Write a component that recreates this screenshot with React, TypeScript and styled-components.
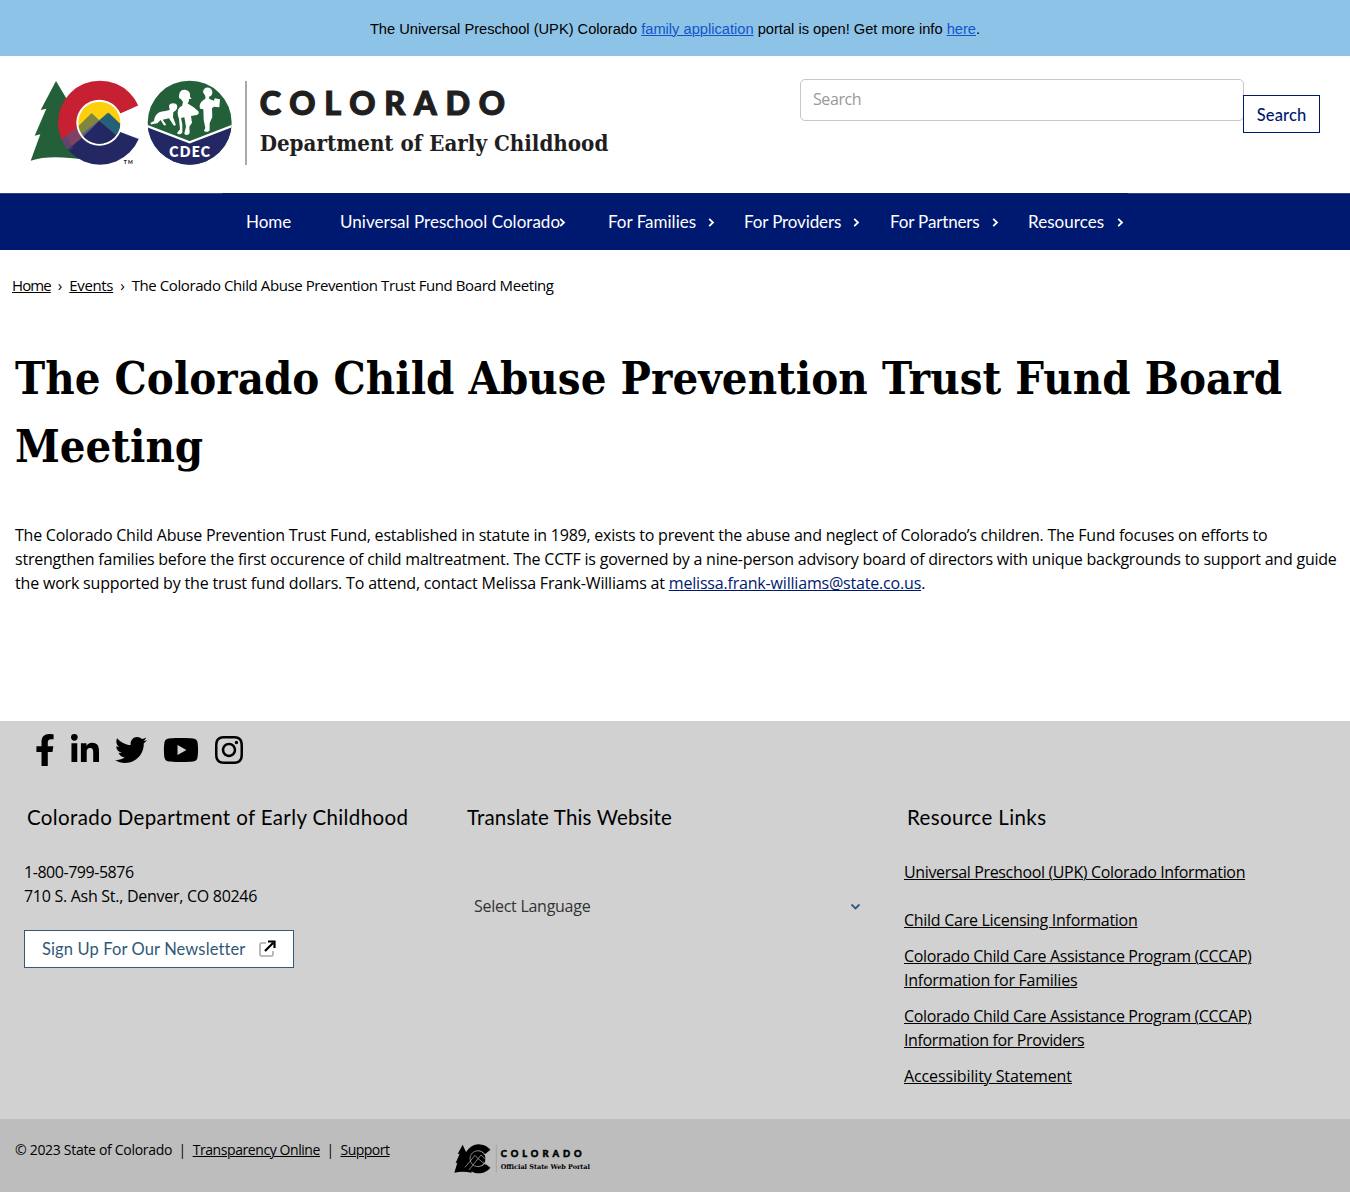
import React from "react";
import styled, { createGlobalStyle } from "styled-components";
import { FaFacebookF, FaLinkedinIn, FaTwitter, FaYoutube, FaInstagram } from "react-icons/fa";

const navy = "#001970";
const body = `"Open Sans", "Noto Sans", sans-serif`;
const museo = `Lato, sans-serif`;
const slab = `"DejaVu Serif Condensed", "DejaVu Serif", serif`;

const Global = createGlobalStyle`
  * { box-sizing: border-box; }
  body { margin: 0; background: #fff; color: #000; font-family: ${body}; font-size: 16px; line-height: 24px; }
  a { color: inherit; text-decoration: underline; text-underline-offset: 1px; text-decoration-thickness: 1px; }
`;

const Text = styled.span<{ $ls?: number }>`
  letter-spacing: ${(p) => p.$ls ?? 0}px;
  white-space: nowrap;
`;

const Banner = styled.div`
  height: 56px;
  display: flex;
  align-items: center;
  justify-content: center;
  padding-top: 2px;
  background: #8dc3e6;
  font: 14.67px "Liberation Sans", Arial, sans-serif;
  white-space: pre;
  a { color: #1155cc; }
`;

const Header = styled.header`
  height: 137px;
  display: flex;
  justify-content: space-between;
  align-items: flex-start;
  padding: 14px 30px 0 20px;
`;

const SearchForm = styled.form`
  display: flex;
  align-items: flex-start;
  padding-top: 9px;
`;

const SearchInput = styled.input`
  width: 444px;
  height: 42px;
  border: 1px solid #c6c6c6;
  border-radius: 5px;
  padding: 0 12px 2px;
  font: 16px ${body};
  letter-spacing: -0.4px;
  &::placeholder { color: #999; opacity: 1; }
`;

const SearchButton = styled.button`
  width: 77px;
  height: 38px;
  margin: 16px 0 0 -1px;
  padding: 1px 0 0;
  border: 1px solid ${navy};
  background: #fff;
  color: ${navy};
  font: 500 16.5px ${museo};
  letter-spacing: 0.15px;
`;

const Nav = styled.nav`
  height: 57px;
  background: ${navy};
  border-top: 1px solid #35437f;
  display: flex;
  justify-content: center;
`;

const NavList = styled.ul`
  margin: -1px 0 0;
  padding: 0 0 0 24px;
  width: 906px;
  height: 57px;
  list-style: none;
  display: flex;
  border-top: 1px solid #0b1a5c;
  color: #fff;
  font: 17px/24px ${museo};
`;

const NavItem = styled.li<{ $w: number }>`
  width: ${(p) => p.$w}px;
  display: flex;
  align-items: center;
`;

const NavArrow = styled.svg<{ $gap: number }>`
  margin: 1px 0 0 ${(p) => p.$gap}px;
  flex: none;
`;

const Crumbs = styled.div`
  height: 72px;
  padding: 23px 12px 0;
  display: flex;
  gap: 7px;
  font-size: 15px;
`;

const Title = styled.h1`
  margin: 0;
  padding: 23px 15px 0;
  height: 201px;
  font: bold 45px/68px ${slab};
  display: flex;
  flex-direction: column;
`;

const Copy = styled.p`
  margin: 0;
  padding: 0 15px;
  height: 198px;
  display: flex;
  flex-direction: column;
  a { color: ${navy}; }
`;

const Footer = styled.footer`
  height: 398px;
  background: #d1d1d1;
`;

const Social = styled.div`
  display: flex;
  gap: 16px;
  padding: 13px 0 0 35px;
  height: 84px;
`;

const SocialLink = styled.a<{ $w: number }>`
  display: block;
  width: ${(p) => p.$w}px;
  height: 32px;
  svg { display: block; width: 100%; height: 32px; }
`;

const Columns = styled.div`
  display: grid;
  grid-template-columns: repeat(3, 440px);
  padding-left: 24px;
`;

const Column = styled.section`
  display: flex;
  flex-direction: column;
  align-items: flex-start;
`;

const Heading = styled.h2`
  margin: 0 0 31px 3px;
  font: 400 20.5px/24px ${museo};
`;

const Newsletter = styled.a`
  && {
    display: flex;
    align-items: center;
    width: 270px;
    height: 38px;
    margin-top: 22px;
    padding-left: 17px;
    gap: 13px;
    border: 1px solid #35597a;
    background: #fff;
    color: #2f5878;
    font: 16.5px ${museo};
    text-decoration: none;
  }
`;

const Language = styled.div`
  display: flex;
  align-items: center;
  justify-content: space-between;
  width: 387px;
  margin: 22px 0 0 10px;
  height: 48px;
  color: #333;
`;

const LanguageArrow = styled.svg`
  margin-top: 2px;
`;

const Links = styled.ul`
  list-style: none;
  padding: 0;
  margin: -12px 0 0;
`;

const LinkItem = styled.li<{ $top?: number }>`
  margin-top: ${(p) => p.$top ?? 12}px;
`;

const LinkAnchor = styled.a`
  display: flex;
  flex-direction: column;
  align-items: flex-start;
  text-decoration: none;
  span { text-decoration: underline; text-underline-offset: 1px; text-decoration-thickness: 1px; }
`;

const Bottom = styled.div`
  height: 73px;
  background: #bdbdbd;
  display: flex;
  align-items: flex-start;
  font-size: 14px;
`;

const Legal = styled.div`
  width: 445px;
  padding: 19px 0 0 15px;
  display: flex;
  gap: 6.4px;
`;

const PortalLogo = styled.svg`
  margin-top: 19px;
`;

const Chevron = ({ gap }: { gap: number }) => (
  <NavArrow $gap={gap} width="7" height="9" viewBox="0 0 7 9" fill="none" stroke="#fff" strokeWidth="1.8">
    <path d="M1.2 .8 5 4.5 1.2 8.2" />
  </NavArrow>
);

const nav = [
  { label: "Home", w: 94, ls: 0 },
  { label: "Universal Preschool Colorado", w: 268, ls: 0.03, gap: -1 },
  { label: "For Families", w: 136, ls: 0, gap: 12 },
  { label: "For Providers", w: 146, ls: -0.13, gap: 12 },
  { label: "For Partners", w: 138, ls: -0.15, gap: 12 },
  { label: "Resources", w: 100, ls: 0.05, gap: 13 },
];

const links: { top?: number; lines: [string, number][] }[] = [
  { lines: [["Universal Preschool (UPK) Colorado Information", -0.35]] },
  { top: 24, lines: [["Child Care Licensing Information", -0.28]] },
  { lines: [["Colorado Child Care Assistance Program (CCCAP)", -0.35], ["Information for Families", -0.25]] },
  { lines: [["Colorado Child Care Assistance Program (CCCAP)", -0.35], ["Information for Providers", -0.36]] },
  { lines: [["Accessibility Statement", -0.13]] },
];

const Logo = () => (
  <svg width="600" height="105" viewBox="0 0 1800 315" role="img">
    <defs>
      <clipPath id="ring"><circle cx="240" cy="158" r="126" /></clipPath>
      <clipPath id="disc"><circle cx="238" cy="158" r="63" /></clipPath>
      <clipPath id="seal"><circle cx="509" cy="158" r="126" /></clipPath>
    </defs>
    <path fill="#235f38" d="M108 33 62 120l17-4-35 81 17-4-29 79c40-13 90-14 168-2V45L142 90Z" />
    <g clipPath="url(#ring)">
      <path fill="#c62032" d="M110 20H380V95L240 158 240 158 115 222Z" />
      <path fill="#7f4262" d="M112 216 180 166 238 158 150 242Z" />
      <path fill="#232864" d="M135 246 240 158 380 212V300H150Z" />
      <path fill="#454477" d="M113 219 137 248 160 234 138 197Z" opacity=".5" />
      <path fill="#fff" d="M238 158 298 132 385 97V218L301 186Z" />
    </g>
    <circle cx="238" cy="158" r="69" fill="#fff" />
    <g clipPath="url(#disc)">
      <path fill="#fdd00d" d="M170 90H310V230H170Z" />
      <path fill="#80853f" d="M165 178 215 129 238 151 262 128 310 175V230H165Z" />
      <path fill="#246179" d="M238 151 266 128 310 170V220Z" />
      <path fill="#546181" d="M170 205 238 151 310 216 240 230Z" />
      <path fill="#232864" d="M160 230 238 152 315 219V240H160Z" />
    </g>
    <text x="311" y="283" fontFamily="Lato" fontWeight="700" fontSize="15" textLength="27">TM</text>
    <g clipPath="url(#seal)">
      <rect x="380" y="30" width="260" height="260" fill="#235f38" />
      <path fill="#232864" d="M370 166 509 219 650 166V300H370Z" />
      <path fill="none" stroke="#fff" strokeWidth="7" d="M374 165 509 217 644 165" />
      <path fill="#fff" d="M447 108c-1-10 22-12 24-2 3 10-4 18-11 20l-1 16 8 21c1 5-5 5-7 2l-13-20-19 4 9 13c3 4-2 6-6 3l-9-15-10 10-16 3c-6 1-6-4-1-6l7-4c2-18 13-28 30-29l17-4Z" />
      <path fill="#fff" d="M477 84c-1-17 6-26 17-25 13 1 18 10 16 21l5 6-8 1c1 8-3 12-5 13l19 12 14 12c3 5 1 9-4 11l-18 3 3 20-8 12 1 17c1 7-10 10-15 6l-1-3 5-20-5-28-10 2 4 19v24c0 6-14 8-16 2l9-11-3-31c-7-21-5-33 9-39l3-12c-2-4-6-9-12-12Z" />
      <path fill="#fff" d="M549 67c0-18 25-19 28-2 1 9-4 14-10 15l1 7 14 5 2-7 16 3-2 24-16-2-6 5 1 26-8 18v20c0 7-13 9-17 3l4-8-5-25-1-31-9-2c-4-8-2-18 10-27l5-2v-9Z" />
    </g>
    <text x="448" y="261" fill="#fff" fontFamily="Lato" fontWeight="800" fontSize="42" textLength="122">CDEC</text>
    <path stroke="#555" strokeWidth="3" d="M678 33V285" />
    <g fill="#1f1f1f">
      <text x="719" y="134" fontFamily="Lato" fontWeight="900" fontSize="97" textLength="736" stroke="#1f1f1f" strokeWidth="3.5">COLORADO</text>
      <text x="719" y="244" fontFamily="DejaVu Serif Condensed, DejaVu Serif, serif" fontWeight="700" fontSize="65" textLength="1046" lengthAdjust="spacingAndGlyphs">Department of Early Childhood</text>
    </g>
  </svg>
);

const icons = [
  { Icon: FaFacebookF, w: 20 },
  { Icon: FaLinkedinIn, w: 28 },
  { Icon: FaTwitter, w: 32 },
  { Icon: FaYoutube, w: 36 },
  { Icon: FaInstagram, w: 28 },
];

export default function App() {
  return (
    <>
      <Global />
      <Banner>
        <span>The Universal Preschool (UPK) Colorado <a href="#">family application</a> portal is open! Get more info <a href="#">here</a>.</span>
      </Banner>
      <Header>
        <Logo />
        <SearchForm>
          <SearchInput placeholder="Search" />
          <SearchButton type="button">Search</SearchButton>
        </SearchForm>
      </Header>
      <Nav>
        <NavList>
          {nav.map((n) => (
            <NavItem key={n.label} $w={n.w}>
              <Text $ls={n.ls}>{n.label}</Text>
              {n.gap !== undefined && <Chevron gap={n.gap} />}
            </NavItem>
          ))}
        </NavList>
      </Nav>
      <main>
        <Crumbs>
          <a href="#"><Text $ls={-0.9}>Home</Text></a><span>›</span>
          <a href="#"><Text $ls={-0.35}>Events</Text></a><span>›</span>
          <Text $ls={-0.41}>The Colorado Child Abuse Prevention Trust Fund Board Meeting</Text>
        </Crumbs>
        <Title>
          <Text $ls={0.04}>The Colorado Child Abuse Prevention Trust Fund Board</Text>
          <Text>Meeting</Text>
        </Title>
        <Copy>
          <Text $ls={-0.225}>The Colorado Child Abuse Prevention Trust Fund, established in statute in 1989, exists to prevent the abuse and neglect of Colorado’s children. The Fund focuses on efforts to</Text>
          <Text $ls={-0.225}>strengthen families before the first occurence of child maltreatment. The CCTF is governed by a nine-person advisory board of directors with unique backgrounds to support and guide</Text>
          <Text $ls={-0.185}>the work supported by the trust fund dollars. To attend, contact Melissa Frank-Williams at <a href="#">melissa.frank-williams@state.co.us</a>.</Text>
        </Copy>
      </main>
      <Footer>
        <Social>
          {icons.map(({ Icon, w }, i) => (
            <SocialLink key={i} href="#" $w={w}><Icon /></SocialLink>
          ))}
        </Social>
        <Columns>
          <Column>
            <Heading><Text $ls={0.37}>Colorado Department of Early Childhood</Text></Heading>
            <Text $ls={-0.46}>1-800-799-5876</Text>
            <Text $ls={-0.28}>710 S. Ash St., Denver, CO 80246</Text>
            <Newsletter href="#">
              <Text $ls={0.12}>Sign Up For Our Newsletter</Text>
              <svg width="18" height="18" viewBox="0 0 18 18" fill="none">
                <path d="M8 3H3.5C2.5 3 2 3.5 2 4.500V14.500C2 15.500 2.500 16 3.500 16H13.500C14.500 16 15 15.500 15 14.500V11" stroke="#aaa" strokeWidth="1.6" />
                <path d="M7 11 15 3M10 1.500H16.500V8" stroke="#000" strokeWidth="2.200" />
              </svg>
            </Newsletter>
          </Column>
          <Column>
            <Heading><Text $ls={0.15}>Translate This Website</Text></Heading>
            <Language>
              <Text $ls={-0.27}>Select Language</Text>
              <LanguageArrow width="11" height="8" viewBox="0 0 11 8" fill="none" stroke="#35597a" strokeWidth="1.8"><path d="M1.500 1.500 5.500 5.500 9.500 1.500" /></LanguageArrow>
            </Language>
          </Column>
          <Column>
            <Heading><Text $ls={0.4}>Resource Links</Text></Heading>
            <Links>
              {links.map((l, i) => (
                <LinkItem key={i} $top={l.top}>
                  <LinkAnchor href="#">
                    {l.lines.map(([t, ls]) => <Text key={t} $ls={ls}>{t}</Text>)}
                  </LinkAnchor>
                </LinkItem>
              ))}
            </Links>
          </Column>
        </Columns>
      </Footer>
      <Bottom>
        <Legal>
          <Text $ls={-0.3}>© 2023 State of Colorado</Text><span>|</span>
          <a href="#"><Text $ls={-0.42}>Transparency Online</Text></a><span>|</span>
          <a href="#"><Text $ls={-0.5}>Support</Text></a>
        </Legal>
        <PortalLogo width="150" height="40" viewBox="0 0 450 120">
          <path d="M53 20 38 48l6-1-12 28 5-1-9 30c20-5 36-3 52 0V32L64 44Z" />
          <path fill="none" stroke="#000" strokeWidth="21" d="M128 42A33 33 0 1 0 128 83" />
          <circle cx="99" cy="62" r="23" />
          <g fill="none" stroke="#bdbdbd" strokeWidth="2">
            <circle cx="99" cy="62" r="24" />
            <path d="M60 88 90 52 99 62 108 51 123 65M72 96 99 62 122 80" />
          </g>
          <path stroke="#999" strokeWidth="2" d="M154 20V104" />
          <text x="167" y="56" fontFamily="Lato" fontWeight="900" fontSize="28" textLength="243" stroke="#000" strokeWidth="1.5">COLORADO</text>
          <text x="167" y="92" fontFamily="DejaVu Serif Condensed, DejaVu Serif, serif" fontWeight="700" fontSize="20" textLength="268" lengthAdjust="spacingAndGlyphs">Official State Web Portal</text>
        </PortalLogo>
      </Bottom>
    </>
  );
}
